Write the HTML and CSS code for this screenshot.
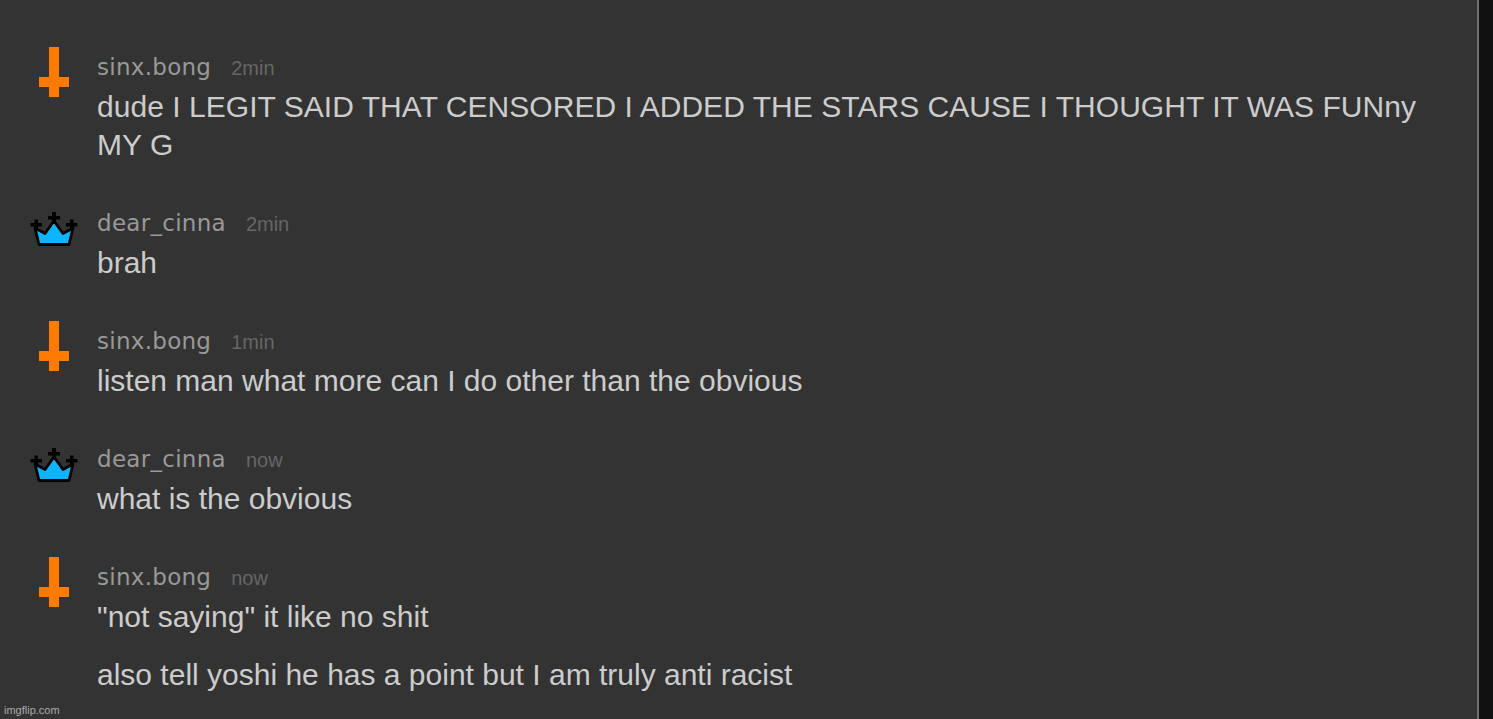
FILE: index.html
```html
<!DOCTYPE html>
<html lang="en">
<head>
    <meta charset="UTF-8">
    <meta name="viewport" content="width=device-width, initial-scale=1.0">
    <title>Chat</title>
    <link rel="stylesheet" href="styles.css">
</head>
<body>
    <svg class="sprite">
        <symbol id="cross" viewBox="0 0 50 50">
            <path fill="#ff7b00" d="M20 0h10v30h10v10H30v10H20V40H10V30h10z"/>
        </symbol>
        <symbol id="crown" viewBox="0 0 50 50">
            <path fill="#0bb5ff" stroke="#000" stroke-width="2.8" stroke-linejoin="round" d="M6 25L16 30.500L25 18L34 30.500L44 25L40 41.500H10z"/>
            <path fill="#000" d="M23 9h4v4h4v3.500h-4v4h-4v-4h-4V13h4zM5.500 16.500H9V20h4v3.500H9V27H5.500v-3.500h-4V20h4zM41 16.500h3.500V20h4v3.500h-4V27H41v-3.500h-4V20h4z"/>
        </symbol>
    </svg>
    <div class="wrapper">
        <div class="chat">
            <div class="message">
                <svg class="icon"><use href="#cross"/></svg>
                <div class="content">
                    <div class="head"><span class="name">sinx.bong</span><span class="time">2min</span></div>
                    <p class="long">dude I LEGIT SAID THAT CENSORED I ADDED THE STARS CAUSE I THOUGHT IT WAS FUNny<br>MY G</p>
                </div>
            </div>
            <div class="message">
                <svg class="icon"><use href="#crown"/></svg>
                <div class="content">
                    <div class="head"><span class="name">dear_cinna</span><span class="time">2min</span></div>
                    <p>brah</p>
                </div>
            </div>
            <div class="message">
                <svg class="icon"><use href="#cross"/></svg>
                <div class="content">
                    <div class="head"><span class="name">sinx.bong</span><span class="time">1min</span></div>
                    <p>listen man what more can I do other than the obvious</p>
                </div>
            </div>
            <div class="message">
                <svg class="icon"><use href="#crown"/></svg>
                <div class="content">
                    <div class="head"><span class="name">dear_cinna</span><span class="time">now</span></div>
                    <p>what is the obvious</p>
                </div>
            </div>
            <div class="message">
                <svg class="icon"><use href="#cross"/></svg>
                <div class="content">
                    <div class="head"><span class="name">sinx.bong</span><span class="time">now</span></div>
                    <p>"not saying" it like no shit</p>
                    <p>also tell yoshi he has a point but I am truly anti racist</p>
                </div>
            </div>
        </div>
        <div class="side"></div>
    </div>
    <span class="watermark">imgflip.com</span>
</body>
</html>
```
FILE: styles.css
```css
body {
    margin: 0;
    background-color: #333;
    font-family: "Liberation Sans", Arial, sans-serif;
    overflow: hidden;
}

.sprite {
    display: none;
}

.wrapper {
    display: flex;
    height: 100vh;
}

.chat {
    flex: 1;
    box-sizing: border-box;
    padding: 47px 0 0 29px;
    border-right: 2px solid #707070;
}

.side {
    width: 14px;
    background-color: #111;
}

.message {
    display: flex;
    gap: 18px;
    margin-bottom: 39px;
}

.icon {
    width: 50px;
    height: 50px;
    flex-shrink: 0;
}

.head {
    display: flex;
    align-items: baseline;
    gap: 20px;
    height: 41px;
    line-height: 40px;
}

.name {
    font-family: "DejaVu Sans", Verdana, sans-serif;
    font-size: 23px;
    letter-spacing: 0.28px;
    color: #999;
}

.time {
    font-size: 20px;
    color: #666;
}

p {
    margin: 0;
    font-size: 30px;
    line-height: 38px;
    color: #ccc;
    white-space: nowrap;
}

p + p {
    margin-top: 20px;
}

.long {
    letter-spacing: 0.04px;
}

.watermark {
    position: absolute;
    left: 4px;
    bottom: 3px;
    font-size: 11px;
    color: #aaa;
}
```
